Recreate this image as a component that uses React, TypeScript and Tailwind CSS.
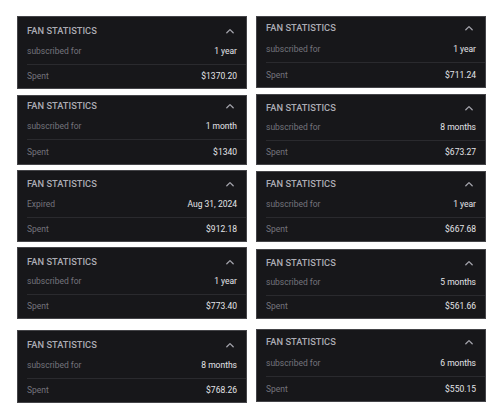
import React from "react";

type Card = { top: number; t: number; h: number; label: string; value: string; spent: string };

const left: Card[] = [
  { top: 16, t: 14, h: 73, label: "subscribed for", value: "1 year", spent: "$1370.20" },
  { top: 6, t: 10, h: 70, label: "subscribed for", value: "1 month", spent: "$1340" },
  { top: 5, t: 13, h: 72, label: "Expired", value: "Aug 31, 2024", spent: "$912.18" },
  { top: 5, t: 14, h: 72, label: "subscribed for", value: "1 year", spent: "$773.40" },
  { top: 11, t: 14, h: 73, label: "subscribed for", value: "8 months", spent: "$768.26" },
];

const right: Card[] = [
  { top: 16, t: 11, h: 72, label: "subscribed for", value: "1 year", spent: "$711.24" },
  { top: 6, t: 13, h: 71, label: "subscribed for", value: "8 months", spent: "$673.27" },
  { top: 6, t: 12, h: 71, label: "subscribed for", value: "1 year", spent: "$667.68" },
  { top: 7, t: 13, h: 70, label: "subscribed for", value: "5 months", spent: "$561.66" },
  { top: 10, t: 12, h: 73, label: "subscribed for", value: "6 months", spent: "$550.15" },
];

function Chevron() {
  return (
    <svg width="10" height="6" viewBox="0 0 10 6" fill="none" className="mr-[2px]">
      <path d="M1.8 4.8 L5 1.6 L8.2 4.8" stroke="#a4a4ac" strokeWidth="1.3" strokeLinecap="round" strokeLinejoin="round" />
    </svg>
  );
}

function StatCard({ c }: { c: Card }) {
  return (
    <div
      className="flex flex-col bg-[#17171a] border border-[#8a8a8e]/40 pl-[9px] overflow-hidden"
      style={{ marginTop: c.top, height: c.h, paddingTop: c.t - 8 }}
    >
      <div className="flex h-[16px] items-center justify-between pr-[9px]">
        <span className="text-[9.3px] font-medium text-[#acacb4]">FAN STATISTICS</span>
        <Chevron />
      </div>
      <div className="flex h-[26px] items-center justify-between pr-[9px]">
        <span className="text-[8.5px] text-[#74747c]">{c.label}</span>
        <span className="text-[8.5px] text-[#e4e4e8]">{c.value}</span>
      </div>
      <div className="h-px bg-[#2a2a2e]" />
      <div className="flex h-[24px] items-center justify-between pr-[9px]">
        <span className="text-[8.5px] text-[#74747c]">Spent</span>
        <span className="text-[8.5px] text-[#e4e4e8]">{c.spent}</span>
      </div>
    </div>
  );
}

export default function App() {
  return (
    <div
      className="w-[502px] h-[420px] bg-white flex"
      style={{ fontFamily: "Roboto, 'Noto Sans', sans-serif" }}
    >
      <div className="ml-[17px] w-[230px] flex flex-col">
        {left.map((c, i) => (
          <StatCard key={i} c={c} />
        ))}
      </div>
      <div className="ml-[9px] w-[230px] flex flex-col">
        {right.map((c, i) => (
          <StatCard key={i} c={c} />
        ))}
      </div>
    </div>
  );
}
